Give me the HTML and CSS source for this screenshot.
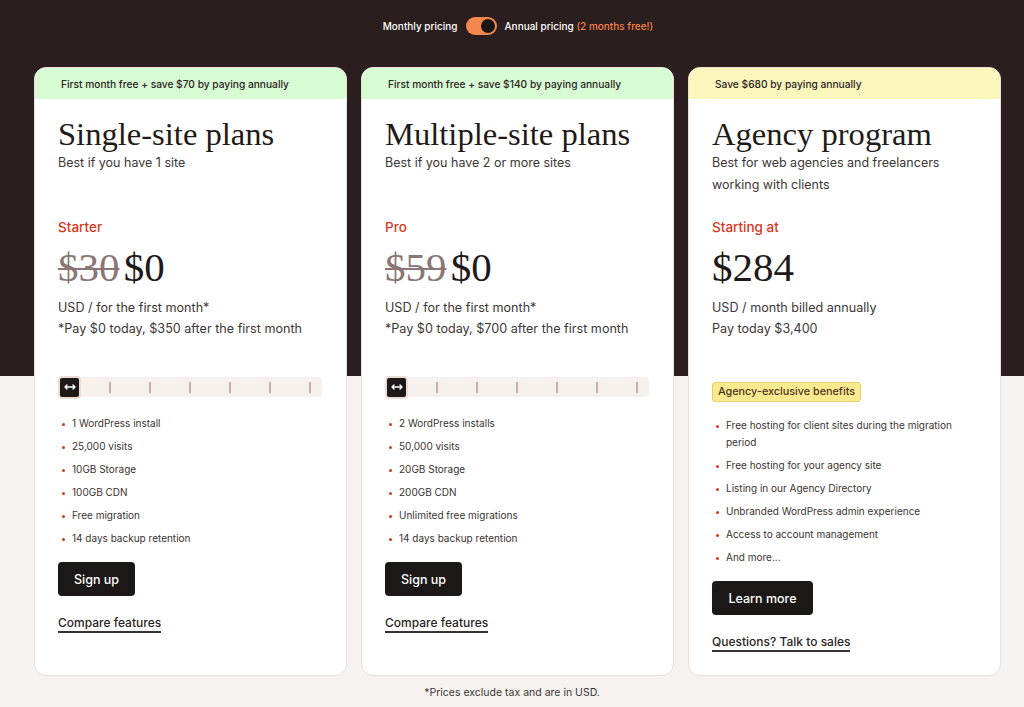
FILE: index.html
```html
<!DOCTYPE html>
<html lang="en">
<head>
<meta charset="utf-8">
<title>Pricing</title>
<link rel="stylesheet" href="styles.css">
</head>
<body>
<div class="page">
  <div class="toggle-row">
    <span class="toggle-label">Monthly pricing</span>
    <span class="switch"><span class="knob"></span></span>
    <span class="toggle-label">Annual pricing <span class="free">(2 months free!)</span></span>
  </div>

  <div class="cards">
    <section class="card">
      <div class="banner green">First month free + save $70 by paying annually</div>
      <div class="card-body">
        <div class="intro">
          <h2 class="title">Single-site plans</h2>
          <p class="desc">Best if you have 1 site</p>
        </div>
        <div class="tier">Starter</div>
        <div class="price"><span class="old">$30</span> $0</div>
        <p class="note">USD / for the first month*</p>
        <p class="note">*Pay $0 today, $350 after the first month</p>
        <div class="slider">
          <span class="handle">
            <svg width="12" height="8" viewBox="0 0 12 8"><path d="M1 4h10M3 2L1 4l2 2M9 2l2 2-2 2" fill="none" stroke="#fff" stroke-width="1.4" stroke-linecap="round" stroke-linejoin="round"/></svg>
          </span>
          <span class="tick"></span><span class="tick"></span><span class="tick"></span><span class="tick"></span><span class="tick"></span><span class="tick"></span>
        </div>
        <ul class="features">
          <li>1 WordPress install</li>
          <li>25,000 visits</li>
          <li>10GB Storage</li>
          <li>100GB CDN</li>
          <li>Free migration</li>
          <li>14 days backup retention</li>
        </ul>
        <a class="btn" href="#">Sign up</a>
        <a class="link" href="#">Compare features</a>
      </div>
    </section>

    <section class="card">
      <div class="banner green">First month free + save $140 by paying annually</div>
      <div class="card-body">
        <div class="intro">
          <h2 class="title">Multiple-site plans</h2>
          <p class="desc">Best if you have 2 or more sites</p>
        </div>
        <div class="tier">Pro</div>
        <div class="price"><span class="old">$59</span> $0</div>
        <p class="note">USD / for the first month*</p>
        <p class="note">*Pay $0 today, $700 after the first month</p>
        <div class="slider">
          <span class="handle">
            <svg width="12" height="8" viewBox="0 0 12 8"><path d="M1 4h10M3 2L1 4l2 2M9 2l2 2-2 2" fill="none" stroke="#fff" stroke-width="1.4" stroke-linecap="round" stroke-linejoin="round"/></svg>
          </span>
          <span class="tick"></span><span class="tick"></span><span class="tick"></span><span class="tick"></span><span class="tick"></span><span class="tick"></span>
        </div>
        <ul class="features">
          <li>2 WordPress installs</li>
          <li>50,000 visits</li>
          <li>20GB Storage</li>
          <li>200GB CDN</li>
          <li>Unlimited free migrations</li>
          <li>14 days backup retention</li>
        </ul>
        <a class="btn" href="#">Sign up</a>
        <a class="link" href="#">Compare features</a>
      </div>
    </section>

    <section class="card">
      <div class="banner yellow">Save $680 by paying annually</div>
      <div class="card-body">
        <div class="intro">
          <h2 class="title">Agency program</h2>
          <p class="desc">Best for web agencies and freelancers working with clients</p>
        </div>
        <div class="tier">Starting at</div>
        <div class="price">$284</div>
        <p class="note">USD / month billed annually</p>
        <p class="note">Pay today $3,400</p>
        <div class="badge-row"><span class="badge">Agency-exclusive benefits</span></div>
        <ul class="features">
          <li>Free hosting for client sites during the migration period</li>
          <li>Free hosting for your agency site</li>
          <li>Listing in our Agency Directory</li>
          <li>Unbranded WordPress admin experience</li>
          <li>Access to account management</li>
          <li>And more...</li>
        </ul>
        <a class="btn btn-lg" href="#">Learn more</a>
        <a class="link" href="#">Questions? Talk to sales</a>
      </div>
    </section>
  </div>

  <p class="footnote">*Prices exclude tax and are in USD.</p>
</div>
</body>
</html>
```

FILE: styles.css
```css
* { box-sizing: border-box; }

html, body { margin: 0; padding: 0; }

body {
  background: linear-gradient(to bottom, #2b1e1e 0, #2b1e1e 376px, #f6f2ef 376px, #f6f2ef 100%);
  font-family: "Inter", "Liberation Sans", sans-serif;
  color: #2b2424;
  min-height: 707px;
}

.page {
  width: 1024px;
  padding-top: 17px;
}

.toggle-row {
  display: flex;
  align-items: center;
  justify-content: center;
  gap: 8px;
  height: 18px;
  padding-left: 12px;
}

.toggle-label {
  color: #ffffff;
  font-size: 10px;
  font-weight: 500;
}

.free { color: #f3804a; }

.switch {
  width: 31px;
  height: 18px;
  border-radius: 9px;
  background: #f5884d;
  display: flex;
  align-items: center;
  justify-content: flex-end;
  padding: 0 2px;
}

.knob {
  width: 14px;
  height: 14px;
  border-radius: 50%;
  background: #1c1616;
}

.cards {
  display: flex;
  gap: 14px;
  padding: 0 0 0 34px;
  margin-top: 32px;
  align-items: stretch;
}

.card {
  flex: 0 0 313px;
  background: #ffffff;
  border: 1px solid #ecdfd8;
  border-radius: 12px;
  overflow: hidden;
  height: 609px;
  display: flex;
  flex-direction: column;
}

.banner {
  height: 31px;
  padding-left: 26px;
  display: flex;
  align-items: center;
  font-size: 10.2px;
  font-weight: 500;
  color: #2b2424;
}

.banner.green { background: #d7fbd2; }
.banner.yellow { background: #fbf6bc; }

.card-body {
  padding: 17px 24px 0 23px;
  display: flex;
  flex-direction: column;
  align-items: flex-start;
}

.intro { height: 101px; }

.title {
  margin: 0;
  font-family: "Liberation Serif", "Times New Roman", serif;
  font-weight: 400;
  font-size: 32.6px;
  line-height: 36px;
  color: #1f1a1a;
}

.desc {
  margin: 0;
  font-size: 12.5px;
  line-height: 22px;
  color: #3d3636;
}

.tier {
  font-size: 13.5px;
  line-height: 20px;
  color: #d4391e;
  font-weight: 500;
}

.price {
  margin-top: 8px;
  font-family: "Liberation Serif", "Times New Roman", serif;
  font-size: 41px;
  line-height: 44px;
  color: #1f1a1a;
  word-spacing: -6px;
}

.old {
  color: #8b7676;
  text-decoration: line-through;
  text-decoration-thickness: 2px;
}

.note {
  margin: 0;
  font-size: 12.6px;
  line-height: 21px;
  color: #3d3636;
}

.price + .note { margin-top: 8px; }

.slider {
  margin-top: 38px;
  width: 264px;
  height: 20px;
  background: #f7f1ee;
  border-radius: 4px;
  display: flex;
  align-items: center;
}

.handle {
  width: 23px;
  height: 23px;
  background: #1e1818;
  border: 2px solid #e9ddd6;
  border-radius: 4px;
  display: flex;
  align-items: center;
  justify-content: center;
  flex: none;
  margin-right: 28px;
}

.tick {
  width: 1.5px;
  height: 11px;
  background: #c9aeaa;
  margin-right: 38.5px;
}

.tick:last-child { margin-right: 0; }

.badge-row {
  margin-top: 40px;
}

.badge {
  display: inline-block;
  height: 20px;
  line-height: 18px;
  padding: 0 5px;
  background: #fbe990;
  border: 1px solid #e9cd66;
  border-radius: 3px;
  font-size: 10.8px;
  color: #4a3620;
  font-weight: 500;
}

.features {
  list-style: none;
  margin: 18px 0 0 0;
  padding: 0 0 0 14px;
  display: flex;
  flex-direction: column;
  gap: 6px;
}

.badge-row + .features { margin-top: 15px; }

.features li {
  position: relative;
  font-size: 10px;
  line-height: 17px;
  color: #3a3232;
}

.features li::before {
  content: "";
  position: absolute;
  left: -10px;
  top: 8px;
  width: 3px;
  height: 3px;
  border-radius: 50%;
  background: #d9361d;
}

.btn {
  margin-top: 15px;
  display: inline-flex;
  align-items: center;
  justify-content: center;
  height: 34px;
  padding: 0 16px;
  background: #1c1818;
  color: #ffffff;
  border-radius: 4px;
  text-decoration: none;
  font-size: 12.5px;
  font-weight: 500;
}

.btn-lg { width: 101px; }

.link {
  margin-top: 19px;
  font-size: 12px;
  line-height: 16px;
  color: #2b2424;
  text-decoration: none;
  border-bottom: 2px solid #3a3232;
  font-weight: 500;
}

.footnote {
  margin: 9px 0 0 0;
  text-align: center;
  font-size: 10.5px;
  color: #3d3636;
  line-height: 16px;
}
```
